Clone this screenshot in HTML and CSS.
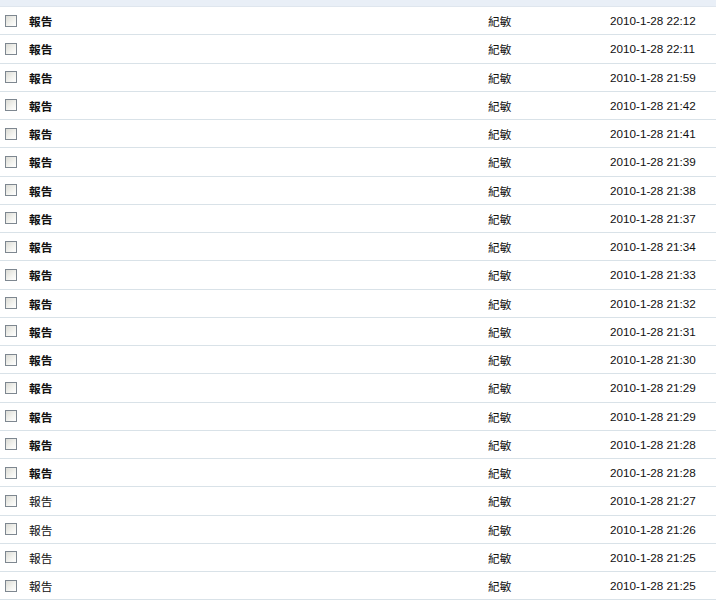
FILE: index.html
```html
<!DOCTYPE html>
<html>
<head>
<meta charset="utf-8">
<link rel="stylesheet" href="styles.css">
</head>
<body>
<div class="topbar"></div>
<div class="list">
  <div class="row unread"><span class="cb"></span><span class="title">報告</span><span class="author">紀敏</span><span class="date">2010-1-28 22:12</span></div>
  <div class="row unread"><span class="cb"></span><span class="title">報告</span><span class="author">紀敏</span><span class="date">2010-1-28 22:11</span></div>
  <div class="row unread"><span class="cb"></span><span class="title">報告</span><span class="author">紀敏</span><span class="date">2010-1-28 21:59</span></div>
  <div class="row unread"><span class="cb"></span><span class="title">報告</span><span class="author">紀敏</span><span class="date">2010-1-28 21:42</span></div>
  <div class="row unread"><span class="cb"></span><span class="title">報告</span><span class="author">紀敏</span><span class="date">2010-1-28 21:41</span></div>
  <div class="row unread"><span class="cb"></span><span class="title">報告</span><span class="author">紀敏</span><span class="date">2010-1-28 21:39</span></div>
  <div class="row unread"><span class="cb"></span><span class="title">報告</span><span class="author">紀敏</span><span class="date">2010-1-28 21:38</span></div>
  <div class="row unread"><span class="cb"></span><span class="title">報告</span><span class="author">紀敏</span><span class="date">2010-1-28 21:37</span></div>
  <div class="row unread"><span class="cb"></span><span class="title">報告</span><span class="author">紀敏</span><span class="date">2010-1-28 21:34</span></div>
  <div class="row unread"><span class="cb"></span><span class="title">報告</span><span class="author">紀敏</span><span class="date">2010-1-28 21:33</span></div>
  <div class="row unread"><span class="cb"></span><span class="title">報告</span><span class="author">紀敏</span><span class="date">2010-1-28 21:32</span></div>
  <div class="row unread"><span class="cb"></span><span class="title">報告</span><span class="author">紀敏</span><span class="date">2010-1-28 21:31</span></div>
  <div class="row unread"><span class="cb"></span><span class="title">報告</span><span class="author">紀敏</span><span class="date">2010-1-28 21:30</span></div>
  <div class="row unread"><span class="cb"></span><span class="title">報告</span><span class="author">紀敏</span><span class="date">2010-1-28 21:29</span></div>
  <div class="row unread"><span class="cb"></span><span class="title">報告</span><span class="author">紀敏</span><span class="date">2010-1-28 21:29</span></div>
  <div class="row unread"><span class="cb"></span><span class="title">報告</span><span class="author">紀敏</span><span class="date">2010-1-28 21:28</span></div>
  <div class="row unread"><span class="cb"></span><span class="title">報告</span><span class="author">紀敏</span><span class="date">2010-1-28 21:28</span></div>
  <div class="row"><span class="cb"></span><span class="title">報告</span><span class="author">紀敏</span><span class="date">2010-1-28 21:27</span></div>
  <div class="row"><span class="cb"></span><span class="title">報告</span><span class="author">紀敏</span><span class="date">2010-1-28 21:26</span></div>
  <div class="row"><span class="cb"></span><span class="title">報告</span><span class="author">紀敏</span><span class="date">2010-1-28 21:25</span></div>
  <div class="row"><span class="cb"></span><span class="title">報告</span><span class="author">紀敏</span><span class="date">2010-1-28 21:25</span></div>
</div>
</body>
</html>
```
FILE: styles.css
```css
html, body {
  margin: 0;
  padding: 0;
  background: #fff;
  overflow: hidden;
}
body {
  font-family: "Liberation Sans", "Noto Sans CJK TC", sans-serif;
  font-size: 11.7px;
  color: #111;
}
.topbar {
  height: 6px;
  background: #e9eff7;
  border-bottom: 1px solid #dfe6ee;
}
.row {
  display: flex;
  align-items: center;
  height: 27.25px;
  border-bottom: 1px solid #d9e2e8;
}
.cb {
  box-sizing: border-box;
  width: 12px;
  height: 12px;
  margin-left: 5px;
  border: 1px solid #7e8790;
  background: linear-gradient(135deg, #dcdcd6 0%, #f4f4f0 60%, #fff 100%);
  flex: none;
}
.title {
  margin-left: 12px;
  width: 459px;
  flex: none;
}
.unread .title {
  font-weight: bold;
}
.author {
  width: 122px;
  flex: none;
}
.date {
  flex: none;
}
```
